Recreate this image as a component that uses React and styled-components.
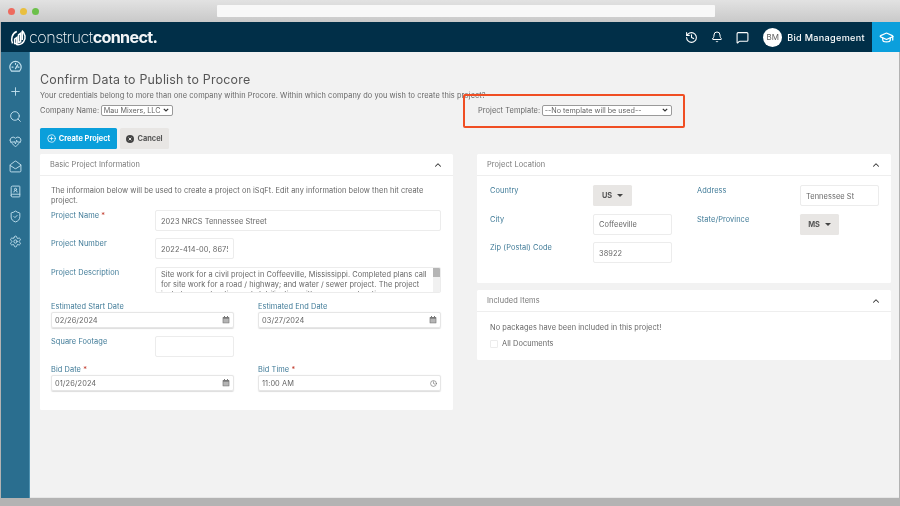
import React from 'react';
import styled, { createGlobalStyle } from 'styled-components';
import { Plus, Search, HeartPulse, MailOpen, BookUser, ShieldCheck, Settings, History, Bell, MessageSquare, GraduationCap, CirclePlus, ChevronUp, Clock } from 'lucide-react';

const Global = createGlobalStyle`
  html, body { margin: 0; padding: 0; background: #b3b3b3; }
  * { box-sizing: border-box; }
  body { font-family: Inter, "Open Sans", "Liberation Sans", sans-serif; }
`;
const Frame = styled.div`
  width: 900px; height: 506px; overflow: hidden; display: flex; flex-direction: column;
  background: #b3b3b3; padding: 0 1px 0 1px; position: relative; filter: blur(0.25px);
`;
const Chrome = styled.div`
  height: 22px; flex: none; margin: 0 -1px; display: flex; align-items: center; position: relative;
  padding-left: 8px; gap: 5px; background: linear-gradient(#e2e2e2, #c9c9c9);
`;
const Dot = styled.span`
  width: 7px; height: 7px; border-radius: 50%; background: ${p => p.$c};
`;
const AddressBar = styled.div`
  width: 498px; height: 12px; margin-left: 173px; background: #f8f8f8; border-radius: 1px;
`;
const Header = styled.header`
  height: 30px; flex: none; background: #012f48; margin-right: -1px; display: flex; align-items: center; color: #fff;
`;
const Logo = styled.div`
  display: flex; align-items: center; margin-left: 9px; gap: 2px; flex: 1;
`;
const LogoText = styled.span`
  font-size: 16.2px; font-weight: 200; letter-spacing: -0.55px; color: #f2f5f7;
  & b { font-weight: 700; letter-spacing: -0.7px; }
`;
const HeaderIcon = styled.span`
  display: flex; margin-right: ${p => p.$mr}px;
`;
const Avatar = styled.span`
  width: 19px; height: 19px; border-radius: 50%; background: #fff; color: #5b5b5b; font-size: 8px;
  display: flex; align-items: center; justify-content: center; margin-right: 5px; flex: none;
`;
const UserName = styled.span`
  font-size: 9.1px; font-weight: 500; margin-right: 7px; white-space: nowrap; letter-spacing: .32px;
`;
const HelpBox = styled.div`
  width: 28px; height: 30px; background: #0b9fdc; display: flex; align-items: center; justify-content: center; flex: none;
`;
const Body = styled.div`
  flex: 1; display: flex; min-height: 0;
`;
const Sidebar = styled.nav`
  width: 29px; flex: none; background: #2a6e8f; border-right: 1px solid #4f93b2; display: flex; flex-direction: column;
  align-items: center; gap: 12px; padding-top: 8px; color: #c4e2ef;
`;
const Main = styled.main`
  flex: 1; background: #f2f2f2; padding: 0 8px 0 10px; position: relative; color: #666; border-bottom: 1px solid #e6e6e6;
`;
const Title = styled.h1`
  font-size: 12.4px; font-weight: 400; margin: 20px 0 0; line-height: 15px; color: #555; letter-spacing: .22px;
`;
const Intro = styled.p`
  margin: 4px 0 0; font-size: 7.4px; line-height: 10px; white-space: nowrap; letter-spacing: .08px;
`;
const SelectRow = styled.div`
  display: grid; grid-template-columns: 438px 1fr; margin-top: 3px; height: 12px;
`;
const SelectField = styled.label`
  display: flex; align-items: center; gap: 1.5px; font-size: 7.4px; letter-spacing: .08px;
`;
const NativeSelect = styled.select`
  appearance: none; font: inherit; font-size: 7.2px; color: #666; height: 11px; width: ${p => p.$w}px; padding: 0 0 0 2px;
  border: 1px solid #9a9a9a; border-radius: 2px;
  background: #fff url("data:image/svg+xml,%3Csvg xmlns='http://www.w3.org/2000/svg' width='6' height='4'%3E%3Cpath d='M.8.8 3 3l2.2-2.2' fill='none' stroke='%23333' stroke-width='1.2'/%3E%3C/svg%3E") no-repeat right 3px center;
`;
const Highlight = styled.div`
  position: absolute; left: 433px; top: 42px; width: 222px; height: 34px; border: 2px solid #f04e23; border-radius: 2px; pointer-events: none;
`;
const Actions = styled.div`
  display: flex; gap: 3px; margin-top: 12px;
`;
const Button = styled.button`
  height: 21px; width: ${p => p.$w}px; border: 0; border-radius: 1.5px; background: ${p => p.$primary ? '#0a9fdb' : '#e8e6e4'};
  color: ${p => p.$primary ? '#fff' : '#555'}; font: inherit; font-size: 7.4px; font-weight: 700; padding: 0;
  display: flex; align-items: center; justify-content: center; gap: 3px;
`;
const Columns = styled.div`
  display: grid; grid-template-columns: 413px 414px; column-gap: 24px; margin-top: 5px; align-items: start;
`;
const Stack = styled.div`
  display: flex; flex-direction: column; gap: 7px;
`;
const Panel = styled.section`
  background: #fff; border-radius: 1.5px;
`;
const PanelHead = styled.div`
  height: 22px; display: flex; align-items: center; justify-content: space-between; padding: 0 10px; border-bottom: 1px solid #eee;
  font-size: 7.4px; color: #777; letter-spacing: .1px;
`;
const LeftBody = styled.div`
  padding: 10px 12px 19px 11px; display: flex; flex-direction: column;
`;
const Para = styled.p`
  margin: 0 0 4px; font-size: 7.4px; line-height: 10px; letter-spacing: .07px;
`;
const Row = styled.div`
  display: grid; grid-template-columns: 104px 1fr; margin-bottom: ${p => p.$mb ?? 7}px;
`;
const Label = styled.label`
  color: #3f7a97; font-size: 7.4px; line-height: 10px; padding-top: 1px; display: block; letter-spacing: .08px;
  & i { color: #c0392b; font-style: normal; }
`;
const TextInput = styled.input`
  width: ${p => p.$w ? p.$w + 'px' : '100%'}; height: 21px; border: 1px solid #ececec; border-radius: 2px; font: inherit; font-size: 7.4px;
  color: #666; padding: 1px 5px 0; background: #fff; outline: none; letter-spacing: .08px;
`;
const DescBox = styled.div`
  height: 26px; border: 1px solid #ececec; border-radius: 2px; display: flex; overflow: hidden;
`;
const DescText = styled.div`
  flex: 1; padding: 2px 5px 0; font-size: 7.4px; line-height: 10px; letter-spacing: .07px;
`;
const ScrollTrack = styled.div`
  width: 7px; flex: none; background: #f1f1f1;
  &::before { content: ''; display: block; height: 9px; background: #b5b5b5; }
`;
const TwoCol = styled.div`
  display: grid; grid-template-columns: 183px 183px; column-gap: 24px; margin-bottom: ${p => p.$mb ?? 0}px;
`;
const DateBox = styled.div`
  height: 16px; border: 1px solid #e6e6e6; border-radius: 2px; display: flex; align-items: center; justify-content: space-between;
  padding: 0 3px; font-size: 7.4px; box-shadow: 0 0.5px 1px #ddd; letter-spacing: .08px; color: #666;
`;
const RightBody = styled.div`
  padding: 9px 12px 20px 13px; display: grid; grid-template-columns: 103px 104px 103px 1fr; grid-auto-rows: 21px; row-gap: 7.5px;
  align-items: start;
`;
const Dropdown = styled.div`
  width: 39px; height: 21px; background: #e8e6e4; border-radius: 1.5px; display: flex; align-items: center; justify-content: center; gap: 5px;
  font-size: 7.4px; font-weight: 700; color: #555;
  &::after { content: ''; border: 3px solid transparent; border-top: 3px solid #444; border-bottom: 0; }
`;
const IncludedBody = styled.div`
  padding: 11px 13px 12px; font-size: 7.4px; letter-spacing: .08px;
`;
const CheckRow = styled.label`
  display: flex; align-items: center; gap: 4px; margin-top: 7px; color: #666;
`;
const Box = styled.span`
  width: 8px; height: 8px; border: 1px solid #ececec; border-radius: 1px;
`;

const Filled = ({ s = 8 }) => (
  <svg width={s} height={s} viewBox="0 0 12 12"><rect x="1" y="1.5" width="10" height="9.5" rx="1" fill="#777"/><rect x="3" y="0" width="1.5" height="3" fill="#777"/><rect x="7.5" y="0" width="1.5" height="3" fill="#777"/><rect x="2" y="4" width="8" height="6" fill="#b5b5b5"/></svg>
);
const CancelIcon = () => (
  <svg width="8" height="8" viewBox="0 0 12 12"><circle cx="6" cy="6" r="6" fill="#444"/><path d="M4 4l4 4M8 4l-4 4" stroke="#e8e6e4" strokeWidth="1.5"/></svg>
);
const LogoMark = () => (
  <svg width="17" height="17" viewBox="0 0 20 20" fill="none">
    <path d="M3 17C.5 12 2.5 5 8 3" stroke="#fff" strokeWidth="1.8"/>
    <path d="M14 2c4 3 5 9 2 13-2 3-6 4-9 3" stroke="#fff" strokeWidth="1.8"/>
    <path d="M5.5 17v-5l2.5-2v7zM10 16V7l2.5-2v10zM14.5 13V2.5" stroke="#fff" strokeWidth="1.8"/>
  </svg>
);
const GaugeIcon = (p) => (
  <svg width={p.size} height={p.size} viewBox="0 0 24 24" fill="none" stroke="currentColor" strokeWidth="2.2" strokeLinecap="round" strokeLinejoin="round">
    <path d="M4.5 20.5a10.5 10.5 0 1 1 15 0z"/>
    <path d="M12 16l4-7M5.5 13h2M16.5 13h2M12 6v2"/>
  </svg>
);
const Field = ({ label, req, children }) => (
  <div><Label>{label}{req && <i> *</i>}</Label>{children}</div>
);
const DateField = ({ value, clock }) => (
  <DateBox><span>{value}</span>{clock ? <Clock size={7} color="#666" /> : <Filled />}</DateBox>
);

const navIcons = [GaugeIcon, Plus, Search, HeartPulse, MailOpen, BookUser, ShieldCheck, Settings];

export default function App() {
  return (
    <Frame>
      <Global />
      <Chrome>
        <Dot $c="#ee6a5e" /><Dot $c="#e9bf3f" /><Dot $c="#6cc04a" />
        <AddressBar />
      </Chrome>
      <Header>
        <Logo><LogoMark /><LogoText>construct<b>connect.</b></LogoText></Logo>
        <HeaderIcon $mr={13}><History size={13} /></HeaderIcon>
        <HeaderIcon $mr={13}><Bell size={12} /></HeaderIcon>
        <HeaderIcon $mr={14}><MessageSquare size={13} /></HeaderIcon>
        <Avatar>BM</Avatar>
        <UserName>Bid Management</UserName>
        <HelpBox><GraduationCap size={15} color="#fff" /></HelpBox>
      </Header>
      <Body>
        <Sidebar>{navIcons.map((I, i) => <I key={i} size={13} strokeWidth={1.7} />)}</Sidebar>
        <Main>
          <Title>Confirm Data to Publish to Procore</Title>
          <Intro>Your credentials belong to more than one company within Procore. Within which company do you wish to create this project?</Intro>
          <SelectRow>
            <SelectField>Company Name: <NativeSelect $w={72} defaultValue="m"><option value="m">Mau Mixers, LLC</option></NativeSelect></SelectField>
            <SelectField>Project Template: <NativeSelect $w={130} defaultValue="n"><option value="n">--No template will be used--</option></NativeSelect></SelectField>
          </SelectRow>
          <Highlight />
          <Actions>
            <Button $primary $w={77}><CirclePlus size={9} />Create Project</Button>
            <Button $w={49}><CancelIcon />Cancel</Button>
          </Actions>
          <Columns>
            <Panel>
              <PanelHead>Basic Project Information<ChevronUp size={10} color="#333" strokeWidth={2.5} /></PanelHead>
              <LeftBody>
                <Para>The informaion below will be used to create a project on iSqFt. Edit any information below then hit create project.</Para>
                <Row>
                  <Label>Project Name <i>*</i></Label>
                  <TextInput readOnly value="2023 NRCS Tennessee Street" />
                </Row>
                <Row $mb={8}>
                  <Label>Project Number</Label>
                  <TextInput $w={79} readOnly value="2022-414-00, 8675" />
                </Row>
                <Row $mb={8}>
                  <Label>Project Description</Label>
                  <DescBox>
                    <DescText>Site work for a civil project in Coffeeville, Mississippi. Completed plans call for site work for a road / highway; and water / sewer project. The project includes construction and stabilization with sewer construction.</DescText>
                    <ScrollTrack />
                  </DescBox>
                </Row>
                <TwoCol $mb={8}>
                  <Field label="Estimated Start Date"><DateField value="02/26/2024" /></Field>
                  <Field label="Estimated End Date"><DateField value="03/27/2024" /></Field>
                </TwoCol>
                <Row>
                  <Label>Square Footage</Label>
                  <TextInput $w={79} readOnly value="" />
                </Row>
                <TwoCol>
                  <Field label="Bid Date" req><DateField value="01/26/2024" /></Field>
                  <Field label="Bid Time" req><DateField value="11:00 AM" clock /></Field>
                </TwoCol>
              </LeftBody>
            </Panel>
            <Stack>
              <Panel>
                <PanelHead>Project Location<ChevronUp size={10} color="#333" strokeWidth={2.5} /></PanelHead>
                <RightBody>
                  <Label>Country</Label><Dropdown>US</Dropdown>
                  <Label>Address</Label><TextInput $w={79} readOnly value="Tennessee St" />
                  <Label>City</Label><TextInput $w={79} readOnly value="Coffeeville" />
                  <Label>State/Province</Label><Dropdown>MS</Dropdown>
                  <Label>Zip (Postal) Code</Label><TextInput $w={79} readOnly value="38922" />
                </RightBody>
              </Panel>
              <Panel>
                <PanelHead>Included Items<ChevronUp size={10} color="#333" strokeWidth={2.5} /></PanelHead>
                <IncludedBody>
                  No packages have been included in this project!
                  <CheckRow><Box />All Documents</CheckRow>
                </IncludedBody>
              </Panel>
            </Stack>
          </Columns>
        </Main>
      </Body>
      <div style={{ height: 8, flex: 'none' }} />
    </Frame>
  );
}
